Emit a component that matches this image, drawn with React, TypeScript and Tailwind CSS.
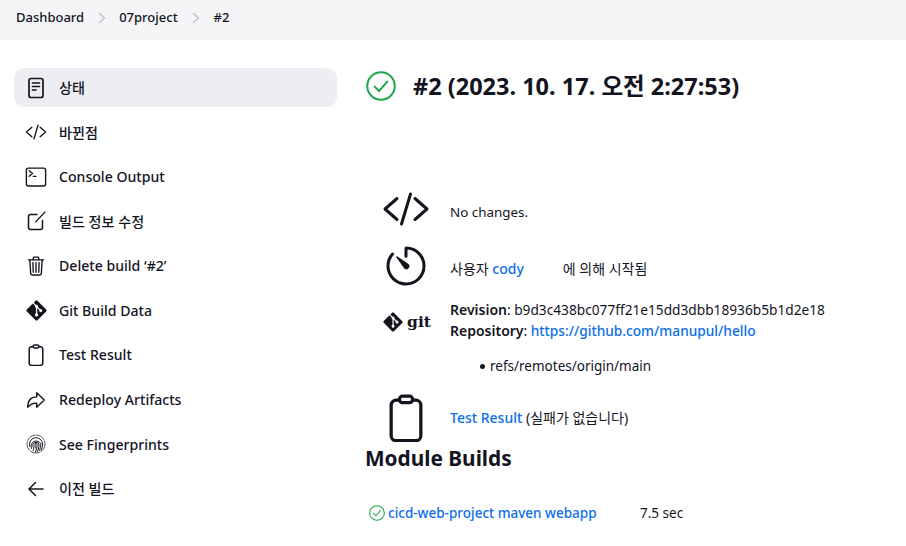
import React from "react";
import {
  IoCodeSlashOutline,
  IoTerminalOutline,
  IoTrashOutline,
  IoArrowRedoOutline,
  IoTimerOutline,
} from "react-icons/io5";
import { FaGitAlt } from "react-icons/fa";

const font = "font-['Noto_Sans','Noto_Sans_CJK_KR',sans-serif]";

function Doc() {
  return (
    <svg viewBox="0 0 22 22" width="22" height="22" fill="none" stroke="currentColor" strokeWidth="1.7" strokeLinecap="round">
      <rect x="4" y="1.5" width="14" height="19" rx="2" />
      <path d="M7.5 6h7M7.5 9.5h7M7.5 13h3.5" />
    </svg>
  );
}

function Edit() {
  return (
    <svg viewBox="0 0 22 22" width="22" height="22" fill="none" stroke="currentColor" strokeWidth="1.5" strokeLinecap="round" strokeLinejoin="round">
      <path d="M12 4.500H5.500a2 2 0 0 0-2 2v11a2 2 0 0 0 2 2h10a2 2 0 0 0 2-2v-7" />
      <path d="M10.500 12L20 2" strokeWidth="1.1" />
    </svg>
  );
}

function Clipboard({ size }: { size: number }) {
  return (
    <svg viewBox="0 0 22 22" width={size} height={size} fill="none" stroke="currentColor" strokeWidth="1.5" strokeLinecap="round" strokeLinejoin="round">
      <path d="M8 2.800H6.500A2.300 2.300 0 0 0 4.200 5.100v14a2.300 2.300 0 0 0 2.300 2.300h9a2.300 2.300 0 0 0 2.300-2.300v-14a2.300 2.300 0 0 0-2.300-2.300H14" />
      <rect x="8" y="1" width="6" height="3" rx="1.400" />
    </svg>
  );
}

function Fingerprint() {
  return (
    <svg viewBox="0 0 22 22" width="22" height="22" fill="none" stroke="currentColor" strokeLinecap="round">
      <circle cx="11" cy="11" r="9" strokeWidth="1" strokeDasharray="9 1.600" opacity="0.75" />
      <path d="M4.800 13.500A6.600 6.600 0 1 1 17.600 11c0 2.500-.6 4.600-1.600 6" strokeWidth="1" />
      <path d="M6.500 15.500A4.800 4.800 0 1 1 15.800 11c0 2.500-.5 4.500-1.500 6.500" strokeWidth="1" />
      <path d="M8.300 17.500c.6-1.500.2-2.500-.1-3.500A3 3 0 1 1 14 11c0 3-.5 5-1.500 7.500" strokeWidth="1" />
      <path d="M10.500 19c1.200-2.500 1.600-5 1.500-8a1 1 0 0 0-2 0c0 1.500 .2 2.500 .2 4" strokeWidth="1" />
    </svg>
  );
}

function Back() {
  return (
    <svg viewBox="0 0 22 22" width="22" height="22" fill="none" stroke="currentColor" strokeWidth="1.5" strokeLinecap="round" strokeLinejoin="round">
      <path d="M18 11H4.500M10.500 4.500L4 11l6.500 6.500" />
    </svg>
  );
}

function Chevron() {
  return (
    <svg viewBox="0 0 8 12" width="8" height="12" fill="none" stroke="#c4c4cf" strokeWidth="1.6" strokeLinecap="round" strokeLinejoin="round" className="mx-[14px]">
      <path d="M1.500 1.500L6.500 6l-5 4.500" />
    </svg>
  );
}

const tasks = [
  { label: "상태", icon: <Doc />, active: true },
  { label: "바뀐점", icon: <IoCodeSlashOutline /> },
  { label: "Console Output", icon: <IoTerminalOutline /> },
  { label: "빌드 정보 수정", icon: <Edit /> },
  { label: "Delete build ‘#2’", icon: <IoTrashOutline /> },
  { label: "Git Build Data", icon: <FaGitAlt className="h-[23px] w-[23px] shrink-0" /> },
  { label: "Test Result", icon: <Clipboard size={22} /> },
  { label: "Redeploy Artifacts", icon: <IoArrowRedoOutline /> },
  { label: "See Fingerprints", icon: <Fingerprint /> },
  { label: "이전 빌드", icon: <Back /> },
];

function CheckCircle({ className }: { className: string }) {
  return (
    <svg viewBox="0 0 24 24" fill="none" stroke="#1ea64b" strokeWidth="1.6" strokeLinecap="round" strokeLinejoin="round" className={className}>
      <circle cx="12" cy="12" r="11" />
      <path d="M7 12.500l3.400 3.600L17 8.500" />
    </svg>
  );
}

export default function App() {
  return (
    <div className={`${font} h-[546px] w-[906px] overflow-hidden bg-white text-[#14141f]`}>
      <div className="flex h-10 items-center bg-[#f5f5f8] pb-[5px] pl-4 text-[13px] font-medium">
        <span>Dashboard</span>
        <Chevron />
        <span className="-ml-px">07project</span>
        <Chevron />
        <span>#2</span>
      </div>

      <div className="flex">
        <div className="ml-[14px] mt-7 flex w-[323px] flex-col gap-[5.6px]">
          {tasks.map((t) => (
            <div
              key={t.label}
              className={`flex h-[39px] items-center rounded-[10px] pl-[11px] text-[14.1px] font-medium ${t.active ? "bg-[#edeef3]" : ""}`}
            >
              <span className="flex w-[22px] justify-center text-[22px]">{t.icon}</span>
              <span className="ml-[12px]">{t.label}</span>
            </div>
          ))}
        </div>

        <div className="ml-[29px] flex-1">
          <div className="mt-[31px] flex h-[30px] items-center gap-[17px]">
            <CheckCircle className="h-[30px] w-[30px]" />
            <h1 className="pt-px text-[23.5px] font-bold">#2 (2023. 10. 17. 오전 2:27:53)</h1>
          </div>

          <div className="mt-[84px] flex h-[48px] items-center">
            <span className="flex w-[84px] justify-center pr-1 text-[48px]">
              <IoCodeSlashOutline />
            </span>
            <p className="pt-[6px] text-[13.4px]">No changes.</p>
          </div>

          <div className="mt-[9px] flex h-[48px] items-center">
            <span className="flex w-[84px] justify-center pr-1 text-[48px]">
              <IoTimerOutline />
            </span>
            <p className="pt-1 text-[14px]">
              사용자 <a className="font-medium text-[#0b6ee8]">cody</a>
              <span className="ml-[39px]">에 의해 시작됨</span>
            </p>
          </div>

          <div className="mt-[9px] flex">
            <div className="flex h-[42px] w-[84px] items-center justify-center gap-[3px] pt-1 pr-[3px]">
              <FaGitAlt className="h-[22px] w-[22px]" />
              <span className="font-['DejaVu_Serif',serif] text-[15.5px] leading-none font-bold">git</span>
            </div>
            <div className="text-[13.7px] leading-[21px]">
              <p>
                <b className="text-[14px] font-semibold">Revision</b>: b9d3c438bc077ff21e15dd3dbb18936b5b1d2e18
              </p>
              <p>
                <b className="text-[14px] font-semibold">Repository</b>:{" "}
                <a className="font-medium text-[#0b6ee8]">https://github.com/manupul/hello</a>
              </p>
              <ul className="mt-[15px] text-[13.5px]">
                <li className="flex items-center">
                  <span className="mr-[5px] ml-[30px] h-[5px] w-[5px] rounded-full bg-[#14141f]" />
                  refs/remotes/origin/main
                </li>
              </ul>
            </div>
          </div>

          <div className="mt-[17px] flex h-[48px] items-center">
            <span className="flex w-[84px] justify-center pr-1">
              <Clipboard size={48} />
            </span>
            <p className="pb-[2px] text-[14px]">
              <a className="font-medium text-[#0b6ee8]">Test Result</a> (실패가 없습니다)
            </p>
          </div>

          <h2 className="mt-px -ml-px text-[20.8px] leading-[30px] font-bold">Module Builds</h2>

          <div className="mt-[30px] flex items-center text-[13.5px]">
            <CheckCircle className="ml-[3px] h-[16px] w-[16px]" />
            <a className="ml-[3px] w-[252px] font-medium text-[#0b6ee8]">cicd-web-project maven webapp</a>
            <span>7.5 sec</span>
          </div>
        </div>
      </div>
    </div>
  );
}
